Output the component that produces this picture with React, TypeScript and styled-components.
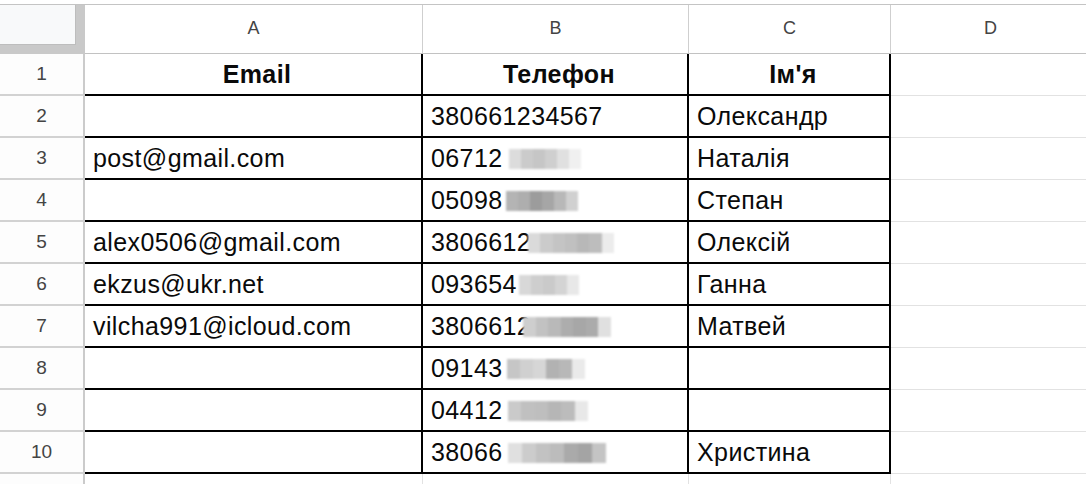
import React from "react";
import styled, { createGlobalStyle } from "styled-components";

const GlobalStyle = createGlobalStyle`
  html, body {
    margin: 0;
    padding: 0;
    background: #ffffff;
    overflow: hidden;
  }
  body {
    font-family: "Liberation Sans", Arial, sans-serif;
  }
`;

const Sheet = styled.div`
  width: 1086px;
  height: 484px;
  padding-top: 4px;
  box-sizing: border-box;
  overflow: hidden;
  background: #fff;
`;

const Grid = styled.div`
  display: grid;
  grid-template-columns: 85px 338px 266px 202px 200px;
  grid-template-rows: 49px repeat(11, 42px);
  border-top: 1px solid #c4c4c4;
  width: 1091px;
`;

const Corner = styled.div`
  box-sizing: border-box;
  background: #f8f9fa;
  border-right: 9px solid #c9c9c9;
  border-bottom: 9px solid #c9c9c9;
  box-shadow: inset -1px -1px 0 #bdbdbd;
`;

const ColHeader = styled.div`
  box-sizing: border-box;
  display: flex;
  align-items: center;
  justify-content: center;
  padding-bottom: 2px;
  border-right: 1px solid #cfcfcf;
  border-bottom: 1px solid #c2c2c2;
  color: #444;
  font-size: 18px;
`;

const RowHeader = styled.div`
  box-sizing: border-box;
  display: flex;
  align-items: center;
  justify-content: center;
  border-right: 2px solid #cbcbcb;
  border-bottom: 2px solid #d2d2d2;
  color: #444;
  font-size: 19px;
  background: #fdfdfd;
`;

const Cell = styled.div<{ $framed?: boolean; $bold?: boolean }>`
  box-sizing: border-box;
  display: flex;
  align-items: center;
  justify-content: ${(p) => (p.$bold ? "center" : "flex-start")};
  padding: 0 0 0 8px;
  border-right: ${(p) => (p.$framed ? "2px solid #000" : "1px solid #e2e2e2")};
  border-bottom: ${(p) => (p.$framed ? "2px solid #000" : "1px solid #e2e2e2")};
  font-size: 25px;
  letter-spacing: 0.4px;
  font-weight: ${(p) => (p.$bold ? 700 : 400)};
  color: #0a0a0a;
  white-space: nowrap;
  overflow: hidden;
`;

const Smudge = styled.span<{ $w: number; $gap: number; $shades: string[] }>`
  display: inline-block;
  flex: none;
  width: ${(p) => p.$w}px;
  height: 20px;
  margin-left: ${(p) => p.$gap}px;
  margin-top: 1px;
  background: ${(p) => {
    const n = p.$shades.length;
    const stops = p.$shades
      .map((c, i) => `${c} ${(i * 100) / n}%, ${c} ${((i + 1) * 100) / n}%`)
      .join(", ");
    return `linear-gradient(90deg, ${stops})`;
  }};
  filter: blur(1px);
`;

type Row = {
  email: string;
  phone: string;
  smudge?: { w: number; gap: number; shades: string[] };
  name: string;
};

const rows: Row[] = [
  { email: "", phone: "380661234567", name: "Олександр" },
  {
    email: "post@gmail.com",
    phone: "06712",
    smudge: { w: 72, gap: 6, shades: ["#dcdcdc", "#cbcbcb", "#c6c6c6", "#cfcfcf", "#e0e0e0", "#f0f0f0"] },
    name: "Наталія",
  },
  {
    email: "",
    phone: "05098",
    smudge: { w: 72, gap: 3, shades: ["#b4b4b4", "#aeaeae", "#9c9c9c", "#a6a6a6", "#b8b8b8", "#d0d0d0"] },
    name: "Степан",
  },
  {
    email: "alex0506@gmail.com",
    phone: "3806612",
    smudge: { w: 86, gap: -3, shades: ["#dadada", "#cbcbcb", "#c4c4c4", "#c0c0c0", "#b8b8b8", "#bdbdbd", "#ececec"] },
    name: "Олексій",
  },
  {
    email: "ekzus@ukr.net",
    phone: "093654",
    smudge: { w: 60, gap: 2, shades: ["#d8d8d8", "#cecece", "#cacaca", "#d4d4d4", "#e8e8e8"] },
    name: "Ганна",
  },
  {
    email: "vilcha991@icloud.com",
    phone: "3806612",
    smudge: { w: 88, gap: -8, shades: ["#cecece", "#c2c2c2", "#b9b9b9", "#adadad", "#a7a7a7", "#ababab", "#e0e0e0"] },
    name: "Матвей",
  },
  {
    email: "",
    phone: "09143",
    smudge: { w: 78, gap: 4, shades: ["#c6c6c6", "#d0d0d0", "#d6d6d6", "#b2b2b2", "#b8b8b8", "#eaeaea"] },
    name: "",
  },
  {
    email: "",
    phone: "04412",
    smudge: { w: 80, gap: 5, shades: ["#cacaca", "#c0c0c0", "#bebebe", "#b6b6b6", "#bcbcbc", "#e8e8e8"] },
    name: "",
  },
  {
    email: "",
    phone: "38066",
    smudge: { w: 98, gap: 5, shades: ["#e0e0e0", "#cccccc", "#c2c2c2", "#bcbcbc", "#aaaaaa", "#a4a4a4", "#c4c4c4"] },
    name: "Христина",
  },
];

const columns = ["A", "B", "C", "D"];

export default function App() {
  return (
    <>
      <GlobalStyle />
      <Sheet>
        <Grid>
          <Corner />
          {columns.map((c) => (
            <ColHeader key={c}>{c}</ColHeader>
          ))}

          <RowHeader>1</RowHeader>
          <Cell $framed $bold>Email</Cell>
          <Cell $framed $bold>Телефон</Cell>
          <Cell $framed $bold>Ім'я</Cell>
          <Cell />

          {rows.map((r, i) => (
            <React.Fragment key={i}>
              <RowHeader>{i + 2}</RowHeader>
              <Cell $framed>{r.email}</Cell>
              <Cell $framed>
                <span>{r.phone}</span>
                {r.smudge && (
                  <Smudge $w={r.smudge.w} $gap={r.smudge.gap} $shades={r.smudge.shades} />
                )}
              </Cell>
              <Cell $framed>{r.name}</Cell>
              <Cell />
            </React.Fragment>
          ))}

          <RowHeader />
          <Cell />
          <Cell />
          <Cell />
          <Cell />
        </Grid>
      </Sheet>
    </>
  );
}
